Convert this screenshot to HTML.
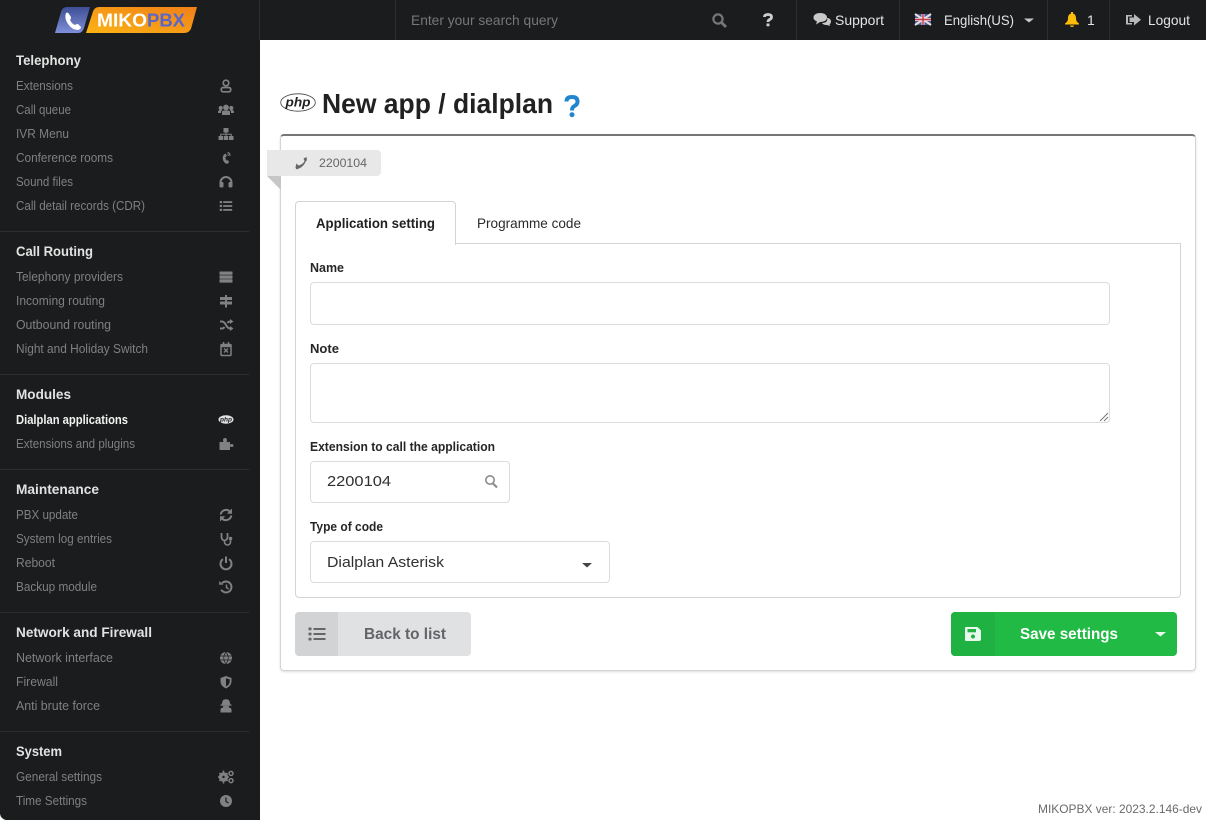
<!DOCTYPE html>
<html lang="en"><head><meta charset="utf-8"><title>New app / dialplan</title>
<style>
html,body{margin:0;padding:0;width:1206px;height:820px;overflow:hidden;background:#fff}
body{position:relative;font-family:"Liberation Sans",sans-serif}
.b{position:absolute;box-sizing:border-box}
.f{border:1px solid #dcdcdd;border-radius:4px;background:#fff}
svg#o{position:absolute;left:0;top:0}
svg text{font-family:"Liberation Sans",sans-serif}
.i{font-size:12.5px;fill:#7f8080}
.h{font-size:13.5px;font-weight:bold;fill:#e2e2e2}
.l{font-size:12.5px;font-weight:bold;fill:#262626}
.t{font-size:14px;fill:#e4e4e4}
.ic{fill:#808181}
.st{fill:none;stroke:#808181}
</style></head><body>
<div class="b" style="left:0;top:0;width:260px;height:820px;background:#1b1c1d"></div>
<div class="b" style="left:260px;top:0;width:946px;height:40px;background:#1b1c1d"></div>
<div class="b" style="left:280px;top:134px;width:916px;height:537px;background:#fff;border:1px solid #d4d4d5;border-top:2px solid #767676;border-radius:4px;box-shadow:0 1px 2px rgba(34,36,38,.15)"></div>
<div class="b" style="left:295px;top:243px;width:886px;height:355px;border:1px solid #d4d4d5;border-radius:0 0 4px 4px"></div>
<div class="b" style="left:295px;top:201px;width:161px;height:44px;background:#fff;border:1px solid #d4d4d5;border-bottom:0;border-radius:4px 4px 0 0"></div>
<div class="b" style="left:267px;top:150px;width:114px;height:26px;background:#e8e8e8;border-radius:0 4px 4px 0"></div>
<div class="b f" style="left:310px;top:282px;width:800px;height:43px"></div>
<div class="b f" style="left:310px;top:363px;width:800px;height:60px"></div>
<div class="b f" style="left:310px;top:461px;width:200px;height:42px"></div>
<div class="b f" style="left:310px;top:541px;width:300px;height:42px"></div>
<div class="b" style="left:295px;top:612px;width:176px;height:44px;background:#e0e1e2;border-radius:4px"></div>
<div class="b" style="left:295px;top:612px;width:43px;height:44px;background:#d2d3d4;border-radius:4px 0 0 4px"></div>
<div class="b" style="left:951px;top:612px;width:226px;height:44px;background:#21ba45;border-radius:4px"></div>
<div class="b" style="left:951px;top:612px;width:44px;height:44px;background:#1fb141;border-radius:4px 0 0 4px"></div>
<svg id="o" width="1206" height="820" viewBox="0 0 1206 820" xmlns="http://www.w3.org/2000/svg">
<defs>
<linearGradient id="gb" x1="0" y1="0" x2="0" y2="1"><stop offset="0" stop-color="#3f4f95"/><stop offset="1" stop-color="#7f8fd8"/></linearGradient>
<linearGradient id="go" x1="1" y1="0" x2="0" y2="1"><stop offset="0" stop-color="#f08018"/><stop offset="1" stop-color="#fbb314"/></linearGradient>
</defs>
<!-- top bar separators -->
<g fill="#2c2d2e"><rect x="259" y="0" width="1" height="40"/><rect x="395" y="0" width="1" height="40"/><rect x="796" y="0" width="1" height="40"/><rect x="899" y="0" width="1" height="40"/><rect x="1047" y="0" width="1" height="40"/><rect x="1109" y="0" width="1" height="40"/></g>
<!-- logo -->
<path d="M67 7H90L84 28Q82.500 33 78 33H55L61 12Q62.500 7 67 7Z" fill="url(#gb)"/>
<path d="M99 7H197L191.500 27Q190 33 184 33H86L92.500 13Q94 7 99 7Z" fill="url(#go)"/>
<path d="M66 13Q68 12 69 14L71 17Q71 19 70 20Q72 24 75 25Q76 24 78 24L81 27Q81 29 78 30Q72 30 68 24Q64 18 66 13Z" fill="#fff"/>
<text x="97" y="26.500" font-size="18" font-weight="bold" fill="#fff" textLength="50" lengthAdjust="spacingAndGlyphs">MIKO</text>
<text x="147" y="26.500" font-size="18" font-weight="bold" fill="#5a66c8" textLength="38" lengthAdjust="spacingAndGlyphs">PBX</text>
<!-- top bar -->
<text x="411" y="25" font-size="14" fill="#777" textLength="147" lengthAdjust="spacingAndGlyphs">Enter your search query</text>
<circle cx="718" cy="19" r="4.600" fill="none" stroke="#777" stroke-width="2.200"/><path d="M721.500 22.500L726 27" stroke="#777" stroke-width="2.800"/>
<path d="M764.500 17Q764.500 14.500 768 14.500Q771.500 14.500 771.500 17Q771.500 18.800 769.500 19.600Q768 20.300 768 22" fill="none" stroke="#ccc" stroke-width="2.800"/><rect x="766.500" y="23.500" width="3" height="2.800" fill="#ccc"/>
<path d="M820 13C824.500 13 827 15 827 17.500S824.500 22 820 22L816 24.500L817 21.500C815 20.500 813.500 19.500 813.500 17.500C813.500 15 816 13 820 13Z" fill="#c9c9c9"/>
<path d="M827 18C830 18 831 20 831 21.500C831 23 830 24 829.500 24.500L830 26L827 25C824 25 822.500 24 822 23C826 23 828 21 827 18Z" fill="#c9c9c9"/>
<text class="t" x="835" y="25" textLength="49" lengthAdjust="spacingAndGlyphs">Support</text>
<rect x="915" y="14" width="16" height="11" fill="#4a5a9a"/><path d="M915 14L931 25M931 14L915 25" stroke="#e8dede" stroke-width="2"/><path d="M923 14V25M915 19.500H931" stroke="#e8dede" stroke-width="3"/><path d="M923 14V25M915 19.500H931" stroke="#c8374a" stroke-width="1.400"/>
<text class="t" x="944" y="25" textLength="70" lengthAdjust="spacingAndGlyphs">English(US)</text>
<path d="M1024 18.500H1034L1029 22.500Z" fill="#c8c8c8"/>
<path d="M1072 13.500C1075 13.500 1076 16 1076 18C1076 21 1077 22 1079 23.500V24.500H1065V23.500C1067 22 1068 21 1068 18C1068 16 1069 13.500 1072 13.500Z" fill="#fbbd08"/><path d="M1070 25.500H1074C1074 27.500 1070 27.500 1070 25.500Z" fill="#fbbd08"/><rect x="1071" y="12" width="2" height="2" fill="#fbbd08"/>
<text class="t" x="1087" y="25" textLength="7">1</text>
<path d="M1126 15H1132V16.500H1128V23H1132V24.500H1126Z" fill="#b8b8b8"/><path d="M1129.500 17.500H1134V14L1141 19.750L1134 25.500V22H1129.500Z" fill="#b8b8b8"/>
<text class="t" x="1148" y="25" textLength="42" lengthAdjust="spacingAndGlyphs">Logout</text>
<!-- sidebar dividers -->
<g fill="#2d2e2f"><rect y="231" width="249" height="1"/><rect y="374" width="249" height="1"/><rect y="469" width="249" height="1"/><rect y="612" width="249" height="1"/><rect y="731" width="249" height="1"/></g>
<!-- sidebar headers -->
<text class="h" x="16" y="65" textLength="65" lengthAdjust="spacingAndGlyphs">Telephony</text>
<text class="h" x="16" y="256" textLength="77" lengthAdjust="spacingAndGlyphs">Call Routing</text>
<text class="h" x="16" y="399" textLength="55" lengthAdjust="spacingAndGlyphs">Modules</text>
<text class="h" x="16" y="494" textLength="83" lengthAdjust="spacingAndGlyphs">Maintenance</text>
<text class="h" x="16" y="637" textLength="136" lengthAdjust="spacingAndGlyphs">Network and Firewall</text>
<text class="h" x="16" y="756" textLength="46" lengthAdjust="spacingAndGlyphs">System</text>
<!-- sidebar items -->
<text class="i" x="16" y="90" textLength="57" lengthAdjust="spacingAndGlyphs">Extensions</text>
<text class="i" x="16" y="114" textLength="55" lengthAdjust="spacingAndGlyphs">Call queue</text>
<text class="i" x="16" y="138" textLength="53" lengthAdjust="spacingAndGlyphs">IVR Menu</text>
<text class="i" x="16" y="162" textLength="97" lengthAdjust="spacingAndGlyphs">Conference rooms</text>
<text class="i" x="16" y="186" textLength="57" lengthAdjust="spacingAndGlyphs">Sound files</text>
<text class="i" x="16" y="210" textLength="129" lengthAdjust="spacingAndGlyphs">Call detail records (CDR)</text>
<text class="i" x="16" y="281" textLength="107" lengthAdjust="spacingAndGlyphs">Telephony providers</text>
<text class="i" x="16" y="305" textLength="89" lengthAdjust="spacingAndGlyphs">Incoming routing</text>
<text class="i" x="16" y="329" textLength="95" lengthAdjust="spacingAndGlyphs">Outbound routing</text>
<text class="i" x="16" y="353" textLength="132" lengthAdjust="spacingAndGlyphs">Night and Holiday Switch</text>
<text class="i" x="16" y="424" textLength="112" lengthAdjust="spacingAndGlyphs" style="fill:#f2f2f2;font-weight:bold">Dialplan applications</text>
<text class="i" x="16" y="448" textLength="119" lengthAdjust="spacingAndGlyphs">Extensions and plugins</text>
<text class="i" x="16" y="519" textLength="62" lengthAdjust="spacingAndGlyphs">PBX update</text>
<text class="i" x="16" y="543" textLength="96" lengthAdjust="spacingAndGlyphs">System log entries</text>
<text class="i" x="16" y="567" textLength="39" lengthAdjust="spacingAndGlyphs">Reboot</text>
<text class="i" x="16" y="591" textLength="81" lengthAdjust="spacingAndGlyphs">Backup module</text>
<text class="i" x="16" y="662" textLength="97" lengthAdjust="spacingAndGlyphs">Network interface</text>
<text class="i" x="16" y="686" textLength="42" lengthAdjust="spacingAndGlyphs">Firewall</text>
<text class="i" x="16" y="710" textLength="84" lengthAdjust="spacingAndGlyphs">Anti brute force</text>
<text class="i" x="16" y="781" textLength="86" lengthAdjust="spacingAndGlyphs">General settings</text>
<text class="i" x="16" y="805" textLength="71" lengthAdjust="spacingAndGlyphs">Time Settings</text>
<!-- sidebar icons -->
<g transform="translate(226,86)"><circle cy="-3" r="2.800" class="st" stroke-width="1.700"/><rect x="-4.700" y="1.500" width="9.400" height="4.300" rx="1.800" class="st" stroke-width="1.700"/></g>
<g transform="translate(226,110)" class="ic"><circle cy="-2.500" r="2.900"/><circle cx="-5.300" cy="-2" r="2.100"/><circle cx="5.300" cy="-2" r="2.100"/><path d="M-4 5V2Q-4 .5-2 .5H2Q4 .5 4 2V5Z"/><path d="M-8 2.500Q-8 0-6 0H-4Q-5 1-5 3H-8ZM8 2.500Q8 0 6 0H4Q5 1 5 3H8Z"/></g>
<g transform="translate(226,134)" class="ic"><rect x="-2.500" y="-6" width="5" height="4.500"/><rect x="-7.500" y="2" width="4.500" height="4"/><rect x="-2.300" y="2" width="4.500" height="4"/><rect x="3" y="2" width="4.500" height="4"/><path d="M-.5-2H.5V-.2H5.800V2H4.800V.8H.5V2H-.5V.8H-4.800V2H-5.800V-.2H-.5Z"/></g>
<g transform="translate(226,158)" class="ic"><path d="M-2-3.500L-.2-4.500L.8-2L-.6-.8Q-.6 1 .6 2.500L2.200 2.200L3 4.800L1.200 5.800Q-1 6-2.800 2.500Q-4-1-2-3.500Z"/><path d="M1.500-5.500Q4-5 4-2.200" fill="none" stroke="#808181" stroke-width="1.200"/><path d="M1.500-3.500Q2.500-3 2.500-2" fill="none" stroke="#808181" stroke-width="1"/></g>
<g transform="translate(226,182)"><path d="M-5.500 3V.5A5.500 5.500 0 0 1 5.500 .5V3" class="st" stroke-width="2"/><rect x="-6.500" y="0" width="4" height="5.500" rx="1.200" class="ic"/><rect x="2.500" y="0" width="4" height="5.500" rx="1.200" class="ic"/></g>
<g transform="translate(226,206)" class="ic"><rect x="-6.300" y="-5" width="2.400" height="2.200"/><rect x="-6.300" y="-1.100" width="2.400" height="2.200"/><rect x="-6.300" y="2.800" width="2.400" height="2.200"/><rect x="-2.800" y="-4.800" width="9" height="1.800"/><rect x="-2.800" y="-.9" width="9" height="1.800"/><rect x="-2.800" y="3" width="9" height="1.800"/></g>
<g transform="translate(226,277)" class="ic"><rect x="-6.500" y="-5.500" width="13" height="3.300" rx=".6"/><rect x="-6.500" y="-1.600" width="13" height="3.300" rx=".6"/><rect x="-6.500" y="2.300" width="13" height="3.300" rx=".6"/></g>
<g transform="translate(226,301)" class="ic"><rect x="-6" y="-4" width="12" height="3"/><rect x="-6" y=".5" width="12" height="3"/><rect x="-1" y="-6" width="2" height="12.500"/></g>
<g transform="translate(226,325)"><path d="M-6-3.500H-4Q-2-3.500 0 0Q2 3.500 4 3.500H5M-6 3.500H-4Q-2.500 3.500-1.500 2M1.500-2Q2.500-3.500 4-3.500H5" class="st" stroke-width="2"/><path d="M4-6L7.500-3.500L4-1ZM4 1L7.500 3.500L4 6Z" class="ic"/></g>
<g transform="translate(226,349)"><rect x="-5" y="-4.500" width="10" height="11" rx="1" class="st" stroke-width="1.500"/><rect x="-5.500" y="-5" width="11" height="3.200" class="ic"/><rect x="-3.200" y="-7" width="1.500" height="3" class="ic"/><rect x="1.700" y="-7" width="1.500" height="3" class="ic"/><path d="M-2-.5L2 3.500M2-.5L-2 3.500" class="st" stroke-width="1.300"/></g>
<ellipse cx="226" cy="419.500" rx="7.500" ry="4.200" fill="#e2e2e2"/><text x="226" y="421.500" font-size="6.500" font-weight="bold" font-style="italic" text-anchor="middle" fill="#1b1c1d">php</text>
<g transform="translate(226,444)" class="ic"><path d="M-6.500-2H-2.500C-3.500-4-3-6-1-6S1.500-4 .5-2H4V.5C6-.5 7.500 0 7.500 1.500S6 3.500 4 2.500V6H-6.500Z"/></g>
<g transform="translate(226,515)"><path d="M-5.300-.5A5.500 5.500 0 0 1 4-3.500M5.300 .5A5.500 5.500 0 0 1-4 3.500" class="st" stroke-width="2"/><path d="M6-6.500V-1.300H.8ZM-6 6.500V1.300H-.8Z" class="ic"/></g>
<g transform="translate(226,539)"><path d="M-4.500-6V-2A3 3.500 0 0 0 1.500-2V-6" class="st" stroke-width="1.800"/><path d="M-1.500 1.500V3A3 3 0 0 0 4.500 3V1" class="st" stroke-width="1.600"/><circle cx="4.500" cy="-.5" r="1.800" class="ic"/></g>
<g transform="translate(226,563)"><path d="M-3-3.800A5.500 5.500 0 1 0 3-3.800" class="st" stroke-width="2"/><rect x="-1" y="-6.500" width="2" height="6.500" class="ic"/></g>
<g transform="translate(226,587)"><path d="M-4-3.800A5.500 5.500 0 1 1-4.800 2.700" class="st" stroke-width="1.900"/><path d="M-6.800-6L-2.600-2.200H-6.800Z" class="ic"/><path d="M.5-2.500V.5L2.500 2" class="st" stroke-width="1.500"/></g>
<g transform="translate(226,658)"><circle r="6" class="ic"/><path d="M-6-2H6M-6 2H6M0-6C-3-2-3 2 0 6M0-6C3-2 3 2 0 6" fill="none" stroke="#1b1c1d" stroke-width=".7"/></g>
<g transform="translate(226,682)"><path d="M0-6L5.500-4V-.5Q5.500 4 0 6.500Q-5.500 4-5.500-.5V-4Z" class="ic"/><path d="M0-3.800L3.700-2.600V-.5Q3.700 2.500 0 4.500Z" fill="#1b1c1d"/></g>
<g transform="translate(226,706)" class="ic"><path d="M-3-6Q0-7.500 3-6L4.500-1.500H-4.500Z"/><rect x="-5.500" y="-1.500" width="11" height="1.200"/><rect x="-3" y="-.3" width="6" height="2.200" rx=".6"/><path d="M-5.500 6.500V4Q-5.500 1.800-3.500 1.800H3.500Q5.500 1.800 5.500 4V6.500Z"/></g>
<g transform="translate(226,777)"><circle cx="-2.500" r="3.500" class="st" stroke-width="2.400"/><path d="M-2.500-6.500V6.500M-8 0H3M-6.500-4L1.500 4M-6.500 4L1.500-4" class="st" stroke-width="1.500"/><circle cx="-2.500" r="1.200" fill="#1b1c1d"/><circle cx="5" cy="-3.600" r="2" class="st" stroke-width="1.500"/><circle cx="5" cy="3.600" r="2" class="st" stroke-width="1.500"/></g>
<g transform="translate(226,801)"><circle r="6" class="ic"/><path d="M0-3.500V.5L2.500 2" fill="none" stroke="#1b1c1d" stroke-width="1.200"/></g>
<!-- bottom left corner -->
<path d="M0 814V820H6Q1 819 0 814Z" fill="#fff"/>
<!-- title -->
<ellipse cx="298" cy="102.500" rx="17.300" ry="8.700" fill="#fff" stroke="#444" stroke-width=".8"/>
<text x="298" y="106.500" font-size="12.500" font-weight="bold" font-style="italic" text-anchor="middle" fill="#222" textLength="25" lengthAdjust="spacingAndGlyphs">php</text>
<text x="322" y="113" font-size="28" font-weight="bold" fill="#212121" textLength="231" lengthAdjust="spacingAndGlyphs">New app / dialplan</text>
<path d="M566.500 101.500Q566.500 97 572 97Q577.500 97 577.500 101.500Q577.500 104.500 574.500 106Q572 107.200 572 110.500" fill="none" stroke="#2185d0" stroke-width="4"/><circle cx="572" cy="114.700" r="2.500" fill="#2185d0"/>
<!-- ribbon -->
<path d="M267 176H281V190Z" fill="#c6c6c6"/>
<path d="M296.500 163.500L298.500 165.500C301.500 165 304.500 162.500 305 159.500V158L306.500 157.500C307 162 302 169 296 169L295.500 167Z" fill="#666"/>
<path d="M296 167.500L298.500 165.500L300 167L297 169.500ZM303.500 158.500L306.500 157L307 160.500L304.500 161Z" fill="#666"/>
<text x="319" y="167" font-size="12" fill="#666" textLength="48" lengthAdjust="spacingAndGlyphs">2200104</text>
<!-- tabs -->
<text x="316" y="228" font-size="14" font-weight="bold" fill="#212121" textLength="119" lengthAdjust="spacingAndGlyphs">Application setting</text>
<text x="477" y="228" font-size="14" fill="#2b2b2b" textLength="104" lengthAdjust="spacingAndGlyphs">Programme code</text>
<!-- form -->
<text class="l" x="310" y="272" textLength="34" lengthAdjust="spacingAndGlyphs">Name</text>
<text class="l" x="310" y="353" textLength="29" lengthAdjust="spacingAndGlyphs">Note</text>
<text class="l" x="310" y="451" textLength="185" lengthAdjust="spacingAndGlyphs">Extension to call the application</text>
<text class="l" x="310" y="531" textLength="73" lengthAdjust="spacingAndGlyphs">Type of code</text>
<path d="M1100 421L1108 413M1104 421L1108 417" stroke="#777" stroke-width="1"/>
<text x="327" y="486" font-size="15" fill="#303030" textLength="64" lengthAdjust="spacingAndGlyphs">2200104</text>
<circle cx="490" cy="480" r="4.200" fill="none" stroke="#8c8c8c" stroke-width="1.600"/><path d="M493 483.500L497 487.500" stroke="#8c8c8c" stroke-width="2.200"/>
<text x="327" y="567" font-size="15" fill="#303030" textLength="117" lengthAdjust="spacingAndGlyphs">Dialplan Asterisk</text>
<path d="M582 563H592L587 567.500Z" fill="#444"/>
<!-- buttons -->
<g transform="translate(317,634)" fill="#666"><rect x="-8.500" y="-6.500" width="3" height="2.800" rx=".5"/><rect x="-8.500" y="-1.400" width="3" height="2.800" rx=".5"/><rect x="-8.500" y="3.700" width="3" height="2.800" rx=".5"/><rect x="-3.500" y="-6" width="12" height="2"/><rect x="-3.500" y="-1" width="12" height="2"/><rect x="-3.500" y="4" width="12" height="2"/></g>
<text x="364" y="639" font-size="16" font-weight="bold" fill="#626468" textLength="82" lengthAdjust="spacingAndGlyphs">Back to list</text>
<path d="M966 627H977.500L981 630.500V639Q981 641 979 641H966Q965 641 965 640V628Q965 627 966 627Z" fill="#e9f8ed"/>
<rect x="967.500" y="629" width="8.500" height="3.300" fill="#1fb141"/><circle cx="973" cy="636.500" r="2" fill="#1fb141"/>
<text x="1020" y="639" font-size="16" font-weight="bold" fill="#fff" textLength="98" lengthAdjust="spacingAndGlyphs">Save settings</text>
<path d="M1155 632H1166L1160.500 636.500Z" fill="#e9f8ed"/>
<!-- footer -->
<text x="1038" y="813" font-size="12" fill="#6a6a6a" textLength="164" lengthAdjust="spacingAndGlyphs">MIKOPBX ver: 2023.2.146-dev</text>
</svg>
</body></html>
